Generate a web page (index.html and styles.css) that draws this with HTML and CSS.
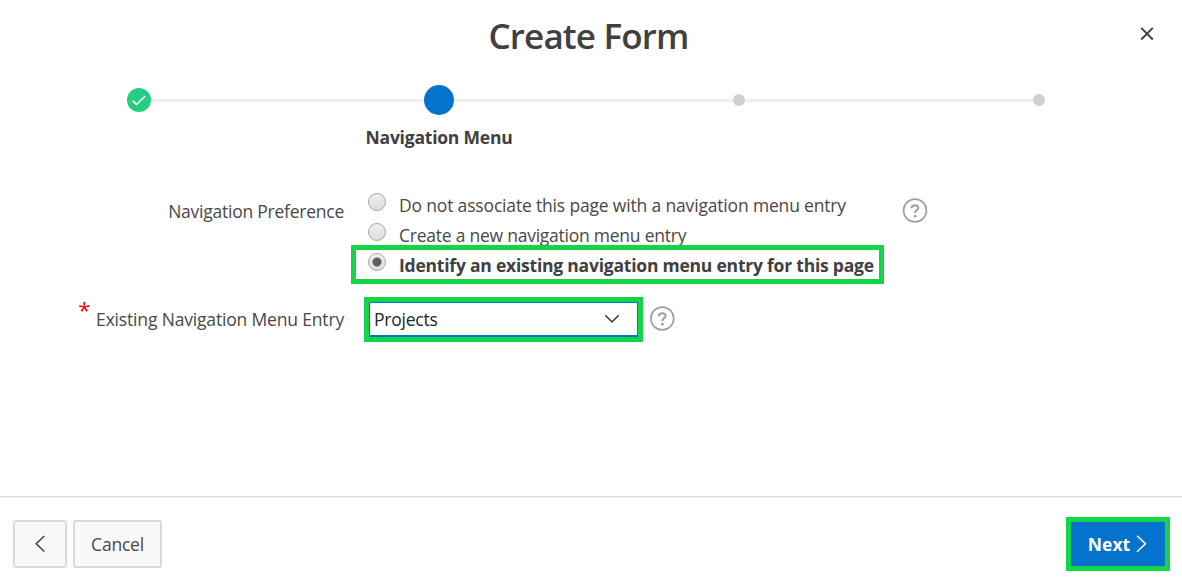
FILE: index.html
```html
<!DOCTYPE html>
<html lang="en">
<head>
<meta charset="utf-8">
<title>Create Form</title>
<link rel="stylesheet" href="styles.css">
</head>
<body>
<main class="dialog">
  <header class="dialog-header">
    <h1 class="title">Create Form</h1>
    <button class="close" aria-label="Close"><svg width="14" height="14" viewBox="0 0 14 14"><path d="M1.2 .9l11.6 11.6M12.8 .9l-11.6 11.6" fill="none" stroke="#404040" stroke-width="2"/></svg></button>
  </header>

  <section class="wizard">
    <ol class="track">
      <li class="marker complete"><svg width="24" height="24" viewBox="0 0 24 24"><path d="M5.6 12.6l3.9 3.9L18.3 8" fill="none" stroke="#fff" stroke-width="1.5"/></svg></li>
      <li class="line"></li>
      <li class="marker current"></li>
      <li class="line"></li>
      <li class="marker pending"></li>
      <li class="line"></li>
      <li class="marker pending"></li>
    </ol>
    <p class="step-name"><span>Navigation Menu</span></p>
  </section>

  <form class="fields">
    <div class="label pref">Navigation Preference</div>
    <div class="choices">
      <div class="choice"><i class="radio"></i><span class="c1">Do not associate this page with a navigation menu entry</span></div>
      <div class="choice"><i class="radio"></i><span class="c2">Create a new navigation menu entry</span></div>
      <div class="choice selected"><i class="radio checked"></i><span class="c3">Identify an existing navigation menu entry for this page</span></div>
    </div>
    <div class="help"><svg width="26" height="26" viewBox="0 0 26 26"><circle cx="13" cy="12.5" r="11.4" fill="none" stroke="#a0a0a0" stroke-width="1.7"/><path d="M9.6 10.3c0-4.2 6.9-4 6.7-.3-.1 2.3-3.2 2-3.2 5" fill="none" stroke="#a0a0a0" stroke-width="2.1"/><circle cx="13.1" cy="18.2" r="1.4" fill="#a0a0a0"/></svg></div>

    <div class="label entry"><b class="required">*</b><span>Existing Navigation Menu Entry</span></div>
    <div class="select-row">
      <div class="select-highlight"><div class="select"><span>Projects</span><svg width="16" height="10" viewBox="0 0 16 10"><path d="M1.3 1.3L8 8l6.7-6.7" fill="none" stroke="#303030" stroke-width="1.4"/></svg></div></div>
      <svg class="select-help" width="26" height="26" viewBox="0 0 26 26"><circle cx="13.3" cy="12.5" r="11.4" fill="none" stroke="#a0a0a0" stroke-width="1.7"/><path d="M9.9 10.3c0-4.2 6.9-4 6.7-.3-.1 2.3-3.2 2-3.2 5" fill="none" stroke="#a0a0a0" stroke-width="2.1"/><circle cx="13.4" cy="18.2" r="1.4" fill="#a0a0a0"/></svg>
    </div>
  </form>

  <footer class="dialog-footer">
    <button class="button back" aria-label="Back"><svg width="12" height="18" viewBox="0 0 12 18"><path d="M10.3 1L2.2 8.7l8.1 7.8" fill="none" stroke="#404040" stroke-width="1.5"/></svg></button>
    <button class="button cancel"><span>Cancel</span></button>
    <button class="button next"><span>Next</span><svg width="12" height="18" viewBox="0 0 12 18"><path d="M1 .7L9.5 8.7l-8.5 8" fill="none" stroke="#fff" stroke-width="1.5"/></svg></button>
  </footer>
</main>
</body>
</html>
```
FILE: styles.css
```css
*, *::before, *::after { box-sizing: border-box; }
body {
  margin: 0;
  background: #fff;
  color: #484848;
  font-family: "Open Sans", "Noto Sans", sans-serif;
  font-size: 17.5px;
  line-height: 30px;
  letter-spacing: -0.22px;
}
button { font: inherit; color: inherit; letter-spacing: inherit; }
svg { display: block; flex: none; }
.dialog { display: flex; flex-direction: column; height: 582px; overflow: hidden; }
.dialog-header { display: grid; grid-template-columns: 80px 1fr 80px; height: 85px; padding-right: 5px; }
.title { grid-column: 2; margin: 0; padding-top: 12px; text-align: center; font-size: 35px; font-weight: 600; line-height: 48px; letter-spacing: -0.85px; color: #404040; }
.close { align-self: start; justify-self: end; margin: 27px 23px 0 0; padding: 0; border: 0; background: none; }

.wizard { height: 109px; padding-left: 127px; }
.track { display: flex; align-items: center; width: 918px; height: 30px; margin: 0; padding: 0; list-style: none; }
.marker { flex: none; border-radius: 50%; }
.complete { width: 24px; height: 24px; background: #26cc80; }
.current { width: 30px; height: 30px; background: #0572ce; }
.pending { width: 12px; height: 12px; background: #d0d0d0; }
.line { height: 3px; background: #efefef; }
.line:nth-child(2) { width: 273px; }
.line:nth-child(4) { width: 279px; }
.line:nth-child(6) { width: 288px; }
.step-name { width: 624px; margin: 7px 0 0; text-align: center; font-weight: 700; color: #404040; }

.fields { display: grid; grid-template-columns: 344px 532px 1fr; grid-template-rows: 103px 45px; flex: 1; }
.label { display: flex; justify-content: flex-end; }
.pref { padding-top: 2px; letter-spacing: -0.24px; }
.choices { padding-left: 24px; }
.choice { position: relative; display: flex; gap: 13px; height: 30px; line-height: 22px; white-space: nowrap; }
.c1 { letter-spacing: -0.17px; }
.c2 { letter-spacing: -0.24px; }
.selected { font-weight: 700; color: #404040; }
.selected::after { content: ""; position: absolute; left: -17px; top: -9px; width: 533px; height: 39px; border: 5px solid #12d548; }
.radio { flex: none; width: 18px; height: 18px; margin-top: -1px; border: 1px solid #a6a6a6; border-radius: 50%; background: linear-gradient(#efefef, #dcdcdc); }
.checked { background: radial-gradient(circle, #5e5e5e 0 4px, transparent 5px), linear-gradient(#efefef, #dcdcdc); }
.help { padding: 4px 0 0 26px; }
.required { margin: -10px 6px 0 0; color: #f00; font-size: 22px; font-weight: 400; }
.entry { padding-top: 7px; letter-spacing: -0.17px; }
.select-row { display: flex; align-items: center; gap: 6px; padding-left: 20px; }
.select-highlight { width: 279px; height: 45px; padding: 5px; background: #12d548; }
.select { display: flex; align-items: center; justify-content: space-between; height: 35px; padding: 0 17px 0 4px; border: solid #0572ce; border-width: 1px 1px 2px; background: #fff; color: #262626; }
.select span { padding-bottom: 1px; }
.select-help { margin-bottom: 2px; }

.dialog-footer { display: flex; align-items: flex-start; height: 86px; padding: 23px 12px 0 13px; border-top: 1px solid #dfdfdf; box-shadow: inset 0 1px #f0f0f0; }
.button { display: flex; align-items: center; justify-content: center; height: 48px; padding: 0; border: 2px solid #dadada; border-radius: 3px; background: #f9f9f9; }
.button span { padding-bottom: 1px; }
.back { width: 54px; }
.cancel { width: 89px; margin-left: 6px; }
.next { gap: 6px; width: 104px; height: 54px; margin: -3px 0 0 auto; border: 5px solid #12d548; border-radius: 0; background: #0572ce; color: #fff; font-weight: 700; letter-spacing: 0; }
```
